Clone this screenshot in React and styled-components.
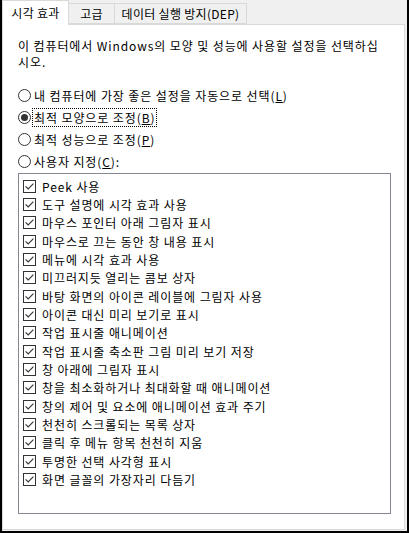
import styled, { createGlobalStyle } from "styled-components";

const Global = createGlobalStyle`
  html, body { margin: 0; padding: 0; background: #f0f0f0; }
  body { font-family: "Noto Sans CJK KR", "Noto Sans", sans-serif; font-size: 12px; color: #000; }
`;

const Window = styled.div`
  width: 409px;
  height: 533px;
  box-sizing: border-box;
  border-left: 2px solid #000;
  border-right: 2px solid #000;
  border-bottom: 2px solid #000;
  background: #f0f0f0;
  display: flex;
  flex-direction: column;
  padding: 0 2px 1px 0;
`;

const TabStrip = styled.div`
  height: 24px;
  display: flex;
  align-items: flex-end;
  position: relative;
  z-index: 1;
`;

const Tab = styled.div`
  box-sizing: border-box;
  height: ${(p) => (p.$active ? "25px" : "21px")};
  margin-bottom: ${(p) => (p.$active ? "-1px" : "0")};
  display: flex;
  align-items: center;
  justify-content: center;
  width: ${(p) => p.$w}px;
  background: ${(p) => (p.$active ? "#fff" : "#f0f0f0")};
  border: 1px solid #d9d9d9;
  border-bottom: ${(p) => (p.$active ? "none" : "1px solid #d9d9d9")};
  margin-left: ${(p) => (p.$first ? "0" : "-1px")};
  line-height: 1;
  letter-spacing: 0.3px;
  padding-top: ${(p) => (p.$active ? "0" : "1px")};
`;

const Panel = styled.div`
  flex: 1;
  background: #fff;
  border: 1px solid #d9d9d9;
  padding: 13px 13px 15px 15px;
  display: flex;
  flex-direction: column;
  letter-spacing: 0.9px;
`;

const Intro = styled.p`
  margin: 0 0 14px;
  line-height: 16px;
`;

const RadioRow = styled.div`
  height: 22px;
  display: flex;
  align-items: center;
`;

const Radio = styled.span`
  width: 13px;
  height: 13px;
  box-sizing: border-box;
  border: 1px solid #333;
  border-radius: 50%;
  display: flex;
  align-items: center;
  justify-content: center;
  margin-right: 2px;
  &::after {
    content: "";
    width: 7px;
    height: 7px;
    border-radius: 50%;
    background: ${(p) => (p.$on ? "#333" : "transparent")};
  }
`;

const Label = styled.span`
  padding: 1px 1px;
  outline: ${(p) => (p.$focus ? "1px dotted #000" : "none")};
  line-height: 15px;
`;

const Key = styled.span`
  text-decoration: underline;
`;

const List = styled.div`
  flex: 1;
  margin-top: 1px;
  border: 1px solid #828790;
  padding: 3px 0 0 3px;
`;

const Item = styled.div`
  height: 18.33px;
  display: flex;
  align-items: center;
`;

const Box = styled.svg`
  width: 13px;
  height: 13px;
  margin: 0 6px 0 1px;
  flex: none;
`;

const Check = () => (
  <Box viewBox="0 0 13 13">
    <rect x="0.5" y="0.5" width="12" height="12" fill="#fff" stroke="#333" />
    <path d="M2.6 6.4 L5.2 9 L10.4 3.6" fill="none" stroke="#333" strokeWidth="1.1" />
  </Box>
);

const items = [
  "Peek 사용",
  "도구 설명에 시각 효과 사용",
  "마우스 포인터 아래 그림자 표시",
  "마우스로 끄는 동안 창 내용 표시",
  "메뉴에 시각 효과 사용",
  "미끄러지듯 열리는 콤보 상자",
  "바탕 화면의 아이콘 레이블에 그림자 사용",
  "아이콘 대신 미리 보기로 표시",
  "작업 표시줄 애니메이션",
  "작업 표시줄 축소판 그림 미리 보기 저장",
  "창 아래에 그림자 표시",
  "창을 최소화하거나 최대화할 때 애니메이션",
  "창의 제어 및 요소에 애니메이션 효과 주기",
  "천천히 스크롤되는 목록 상자",
  "클릭 후 메뉴 항목 천천히 지움",
  "투명한 선택 사각형 표시",
  "화면 글꼴의 가장자리 다듬기",
];

const radios = [
  { text: "내 컴퓨터에 가장 좋은 설정을 자동으로 선택", key: "L" },
  { text: "최적 모양으로 조정", key: "B", on: true },
  { text: "최적 성능으로 조정", key: "P" },
  { text: "사용자 지정", key: "C", colon: true },
];

export default function App() {
  return (
    <>
      <Global />
      <Window>
        <TabStrip>
          <Tab $active $first $w={67}>시각 효과</Tab>
          <Tab $w={47}>고급</Tab>
          <Tab $w={133}>데이터 실행 방지(DEP)</Tab>
        </TabStrip>
        <Panel>
          <Intro>
            이 컴퓨터에서 Windows의 모양 및 성능에 사용할 설정을 선택하십
            <br />
            시오.
          </Intro>
          {radios.map((r) => (
            <RadioRow key={r.key}>
              <Radio $on={r.on} />
              <Label $focus={r.on}>
                {r.text}(<Key>{r.key}</Key>){r.colon ? ":" : ""}
              </Label>
            </RadioRow>
          ))}
          <List>
            {items.map((t) => (
              <Item key={t}>
                <Check />
                {t}
              </Item>
            ))}
          </List>
        </Panel>
      </Window>
    </>
  );
}
